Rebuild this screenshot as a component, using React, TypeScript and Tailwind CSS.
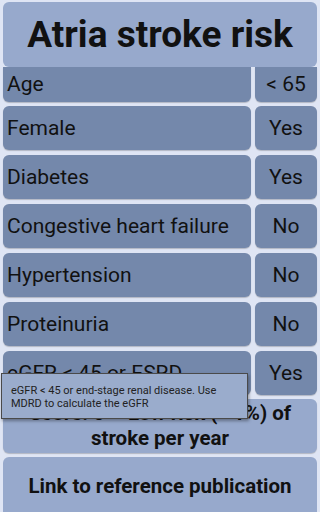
import React from 'react';

const rows = [
  { label: 'Female', value: 'Yes' },
  { label: 'Diabetes', value: 'Yes' },
  { label: 'Congestive heart failure', value: 'No' },
  { label: 'Hypertension', value: 'No' },
  { label: 'Proteinuria', value: 'No' },
  { label: 'eGFR < 45 or ESRD', value: 'Yes' },
];

function Row({ label, value }: { label: string; value: string }) {
  return (
    <div className="flex gap-[4px] h-[44px]">
      <div className="flex-1 rounded-[6px] bg-[#7488ab] shadow-[0_1px_1px_rgba(0,0,0,0.2)] flex items-center pl-[4px] pt-[2px] text-[21px] text-[#111]">
        {label}
      </div>
      <div className="w-[62px] rounded-[6px] bg-[#7488ab] shadow-[0_1px_1px_rgba(0,0,0,0.2)] flex items-center justify-center pt-[2px] text-[21px] text-[#111]">
        {value}
      </div>
    </div>
  );
}

export default function App() {
  return (
    <div
      className="relative w-[320px] h-[512px] overflow-hidden bg-[#dfe5f4] px-[3px] pt-[2px] flex flex-col"
      style={{ fontFamily: 'Roboto, "Noto Sans", sans-serif' }}
    >
      <div className="h-[65px] shrink-0 rounded-[6px] bg-[#97a9cc] flex items-center justify-center text-[37px] font-bold text-[#111]">
        Atria stroke risk
      </div>
      <div className="flex gap-[4px] h-[35px] shrink-0">
        <div className="flex-1 rounded-b-[6px] bg-[#7488ab] shadow-[0_1px_1px_rgba(0,0,0,0.2)] flex items-center pl-[4px] text-[21px] text-[#111]">
          Age
        </div>
        <div className="w-[62px] rounded-b-[6px] bg-[#7488ab] shadow-[0_1px_1px_rgba(0,0,0,0.2)] flex items-center justify-center text-[21px] text-[#111]">
          &lt; 65
        </div>
      </div>
      <div className="flex flex-col gap-[5px] mt-[4px] shrink-0">
        {rows.map((r) => (
          <Row key={r.label} label={r.label} value={r.value} />
        ))}
      </div>
      <div className="mt-[4px] h-[54px] shrink-0 rounded-[6px] bg-[#97a9cc] shadow-[0_1px_1px_rgba(0,0,0,0.2)] flex items-center justify-center text-center text-[20.5px] font-bold leading-[25px] text-[#111] px-[6px]">
        Score: 0 – Low risk (&lt; 1%) of stroke per year
      </div>
      <div className="mt-[4px] h-[60px] shrink-0 rounded-[6px] bg-[#97a9cc] flex items-start pt-[14px] justify-center text-[20.5px] font-bold text-[#111]">
        Link to reference publication
      </div>

      <div className="absolute left-[1px] top-[373px] w-[247px] h-[46px] bg-[#9aaccc] border border-[#4a4a4a] shadow-[1px_2px_3px_rgba(0,0,0,0.35)] pl-[9px] pt-[10px] text-[11px] leading-[13px] text-[#222]">
        eGFR &lt; 45 or end-stage renal disease. Use
        <br />
        MDRD to calculate the eGFR
      </div>
    </div>
  );
}
